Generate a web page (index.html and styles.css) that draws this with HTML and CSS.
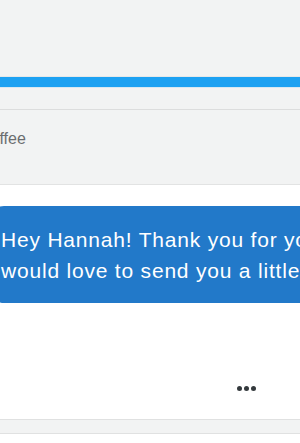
FILE: index.html
```html
<!DOCTYPE html>
<html>
<head>
<meta charset="utf-8">
<link rel="stylesheet" href="styles.css">
</head>
<body>
<div class="page">
  <div class="top"></div>
  <div class="progress"></div>
  <div class="spacer"></div>
  <div class="subject"><span class="subject-text">Coffee</span></div>
  <div class="content">
    <div class="bubble">
      <p class="line">Hey Hannah! Thank you for your help today, I</p>
      <p class="line">would love to send you a little something</p>
    </div>
    <div class="actions">
      <span class="dot"></span><span class="dot"></span><span class="dot"></span>
    </div>
  </div>
  <div class="footer"></div>
</div>
</body>
</html>
```
FILE: styles.css
```css
html, body {
  margin: 0;
  padding: 0;
  background: #ffffff;
}
.page {
  width: 300px;
  height: 443px;
  overflow: hidden;
  font-family: "Liberation Sans", Arial, sans-serif;
}
.top {
  height: 76px;
  background: #f2f3f3;
  border-bottom: 1px solid #e6e8e8;
}
.progress {
  height: 10px;
  background: #1da1f2;
  border-bottom: 1px solid #d8e8f2;
}
.spacer {
  height: 21px;
  background: #f2f3f3;
  border-bottom: 1px solid #dcdddd;
}
.subject {
  height: 75px;
  background: #f2f3f3;
  border-bottom: 1px solid #e2e3e3;
  box-sizing: border-box;
  padding-top: 20px;
}
.subject-text {
  display: block;
  margin-left: -21px;
  font-size: 16px;
  line-height: 18px;
  color: #6b6d6f;
  white-space: nowrap;
}
.content {
  height: 234px;
  background: #ffffff;
  padding-top: 21px;
  box-sizing: border-box;
}
.bubble {
  margin-left: -10px;
  width: 460px;
  height: 97px;
  box-sizing: border-box;
  padding: 18px 0 0 11px;
  background: #2279c9;
  border-radius: 14px;
}
.line {
  margin: 0;
  font-size: 21px;
  line-height: 31px;
  color: #ffffff;
  white-space: nowrap;
  letter-spacing: 0.8px;
}
.actions {
  display: flex;
  gap: 2px;
  margin: 83px 0 0 237px;
}
.dot {
  width: 5px;
  height: 5px;
  border-radius: 50%;
  background: #343a3d;
}
.footer {
  height: 13px;
  background: #f2f3f3;
  border-top: 1px solid #e0e1e1;
  border-bottom: 1px solid #e0e1e1;
}
```
